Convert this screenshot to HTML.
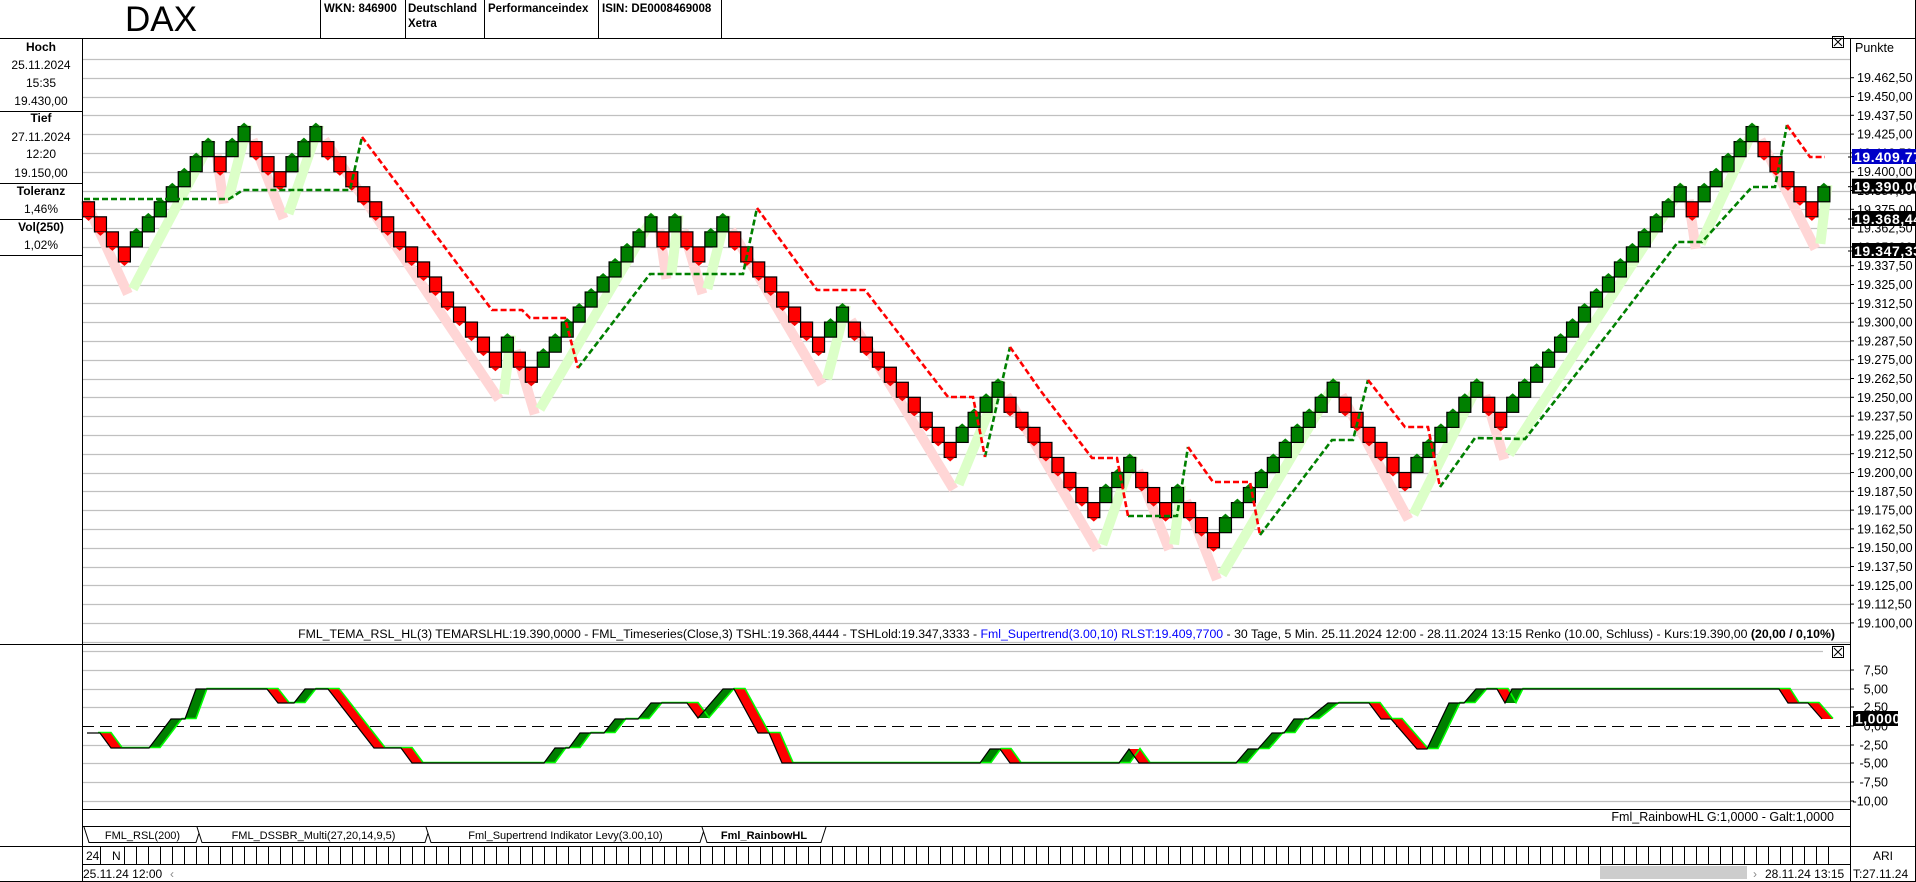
<!DOCTYPE html>
<html><head><meta charset="utf-8">
<style>
html,body{margin:0;padding:0;background:#fff;width:1916px;height:882px;overflow:hidden;font-family:"Liberation Sans",Arial,sans-serif;}
svg{position:absolute;left:0;top:0;}
.t{font-family:"Liberation Sans",Arial,sans-serif;}
#legend{position:absolute;right:81px;top:627px;font-size:12.3px;white-space:nowrap;color:#000;font-family:"Liberation Sans",Arial,sans-serif;}
</style></head><body>
<svg id="s" width="1916" height="882" xmlns="http://www.w3.org/2000/svg">
<g id="grid"></g>
<g id="bands"></g>
<g id="bricks"></g>
<g id="dash"></g>
<g id="ind"></g>
<g id="frame" stroke="#000" stroke-width="1" fill="none">
<line x1="0" y1="38.5" x2="1916" y2="38.5"/>
<line x1="82.5" y1="38" x2="82.5" y2="882"/>
<line x1="1850.5" y1="38" x2="1850.5" y2="882"/>
<line x1="1915.5" y1="0" x2="1915.5" y2="882"/>
<line x1="320.5" y1="0" x2="320.5" y2="38"/>
<line x1="405.5" y1="0" x2="405.5" y2="38"/>
<line x1="484.5" y1="0" x2="484.5" y2="38"/>
<line x1="598.5" y1="0" x2="598.5" y2="38"/>
<line x1="721.5" y1="0" x2="721.5" y2="38"/>
<line x1="0" y1="111.5" x2="82" y2="111.5"/>
<line x1="0" y1="183.5" x2="82" y2="183.5"/>
<line x1="0" y1="219.5" x2="82" y2="219.5"/>
<line x1="0" y1="255.5" x2="82" y2="255.5"/>
<line x1="0" y1="644.5" x2="1850" y2="644.5"/>
<line x1="82" y1="809.5" x2="1850" y2="809.5"/>
<line x1="82" y1="826.5" x2="1850" y2="826.5"/>
<line x1="0" y1="846.5" x2="1916" y2="846.5"/>
<line x1="82" y1="864.5" x2="1850" y2="864.5"/>
<line x1="0" y1="881.5" x2="1916" y2="881.5"/>
<rect x="1832.5" y="36.5" width="11" height="11"/>
<path d="M1834 38 L1842 46 M1842 38 L1834 46"/>
<rect x="1832.5" y="646.5" width="11" height="11"/>
<path d="M1834 648 L1842 656 M1842 648 L1834 656"/>
</g>
<g class="t" fill="#000">
<text x="125" y="31" font-size="35">DAX</text>
<text x="324" y="12" font-size="11.5" font-weight="bold">WKN: 846900</text>
<text x="408" y="12" font-size="11.5" font-weight="bold">Deutschland</text>
<text x="408" y="27" font-size="11.5" font-weight="bold">Xetra</text>
<text x="488" y="12" font-size="11.5" font-weight="bold">Performanceindex</text>
<text x="602" y="12" font-size="11.5" font-weight="bold">ISIN: DE0008469008</text>
<g font-size="12" text-anchor="middle">
<text x="41" y="51" font-weight="bold">Hoch</text>
<text x="41" y="69">25.11.2024</text>
<text x="41" y="87">15:35</text>
<text x="41" y="105">19.430,00</text>
<text x="41" y="122" font-weight="bold">Tief</text>
<text x="41" y="141">27.11.2024</text>
<text x="41" y="158">12:20</text>
<text x="41" y="177">19.150,00</text>
<text x="41" y="195" font-weight="bold">Toleranz</text>
<text x="41" y="213">1,46%</text>
<text x="41" y="231" font-weight="bold">Vol(250)</text>
<text x="41" y="249">1,02%</text>
</g>
<text x="1855" y="52" font-size="12.5">Punkte</text>
</g>
<g id="axis" class="t"></g>
<g id="tabs" class="t"></g>
<g id="time" class="t"></g>
</svg>
<div id="legend">FML_TEMA_RSL_HL(3) TEMARSLHL:19.390,0000 - FML_Timeseries(Close,3) TSHL:19.368,4444 - TSHLold:19.347,3333 - <span style="color:#0000ff">Fml_Supertrend(3.00,10) RLST:19.409,7700</span> - 30 Tage, 5 Min. 25.11.2024 12:00 - 28.11.2024 13:15 Renko (10.00, Schluss) - Kurs:19.390,00 <b>(20,00 / 0,10%)</b></div>
<script>
var NS="http://www.w3.org/2000/svg";
function el(p,t,a,txt){var e=document.createElementNS(NS,t);for(var k in a)e.setAttribute(k,a[k]);if(txt!==undefined)e.textContent=txt;document.getElementById(p).appendChild(e);return e;}
function Y(p){return 77.7+(19462.5-p)*1.504;}
function fmt(v,d){var neg=v<0;v=Math.abs(v);var s=v.toFixed(d).split('.');var i=s[0].replace(/\B(?=(\d{3})+(?!\d))/g,'.');return (neg?'-':'')+i+(d?','+s[1]:'');}
for(var p=19475;p>=19087.5;p-=12.5){var y=Math.round(Y(p))+0.5;el('grid','line',{x1:82,x2:1850,y1:y,y2:y,stroke:'#c0c0c0','stroke-width':1.2});}
for(var p=19462.5;p>=19099;p-=12.5){var y=Y(p);el('axis','line',{x1:1850,x2:1854,y1:y,y2:y,stroke:'#000'});el('axis','text',{x:1857,y:y+4.5,'font-size':12.5,fill:'#000'},fmt(p,2));}
[651,670,689,707,745,763,782,801].forEach(function(y){el('grid','line',{x1:82,x2:(y==651?1823:1850),y1:y+0.5,y2:y+0.5,stroke:'#c0c0c0','stroke-width':1.2});});
el('grid','line',{x1:82,x2:1850,y1:726.5,y2:726.5,stroke:'#000','stroke-dasharray':'12 6'});
[[670,'7,50'],[689,'5,00'],[707,'2,50'],[726,'0,00'],[745,'-2,50'],[763,'-5,00'],[782,'-7,50'],[801,'-10,00']].forEach(function(a){el('axis','line',{x1:1850,x2:1854,y1:a[0],y2:a[0],stroke:'#000'});el('axis','text',{x:1888,y:a[0]+4.5,'font-size':12.5,'text-anchor':'end',fill:'#000'},a[1]);});
[[157,'#0000c8','19.409,77'],[186.7,'#000','19.390,00'],[219,'#000','19.368,44'],[251,'#000','19.347,33']].forEach(function(b){el('axis','line',{x1:1848,x2:1853,y1:b[0],y2:b[0],stroke:'#000'});el('axis','rect',{x:1852,y:b[0]-8,width:64,height:15,fill:b[1]});el('axis','text',{x:1854,y:b[0]+5,'font-size':14,'font-weight':'bold',fill:'#fff','letter-spacing':'0.6'},b[2]);});
el('axis','rect',{x:1853,y:711,width:45,height:15,fill:'#000'});
el('axis','text',{x:1855,y:723.5,'font-size':14,'font-weight':'bold',fill:'#fff','letter-spacing':'0.5'},'1,0000');
var runs=[['D',3],['U',7],['D',1],['U',2],['D',3],['U',3],['D',15],['U',1],['D',2],['U',10],['D',1],['U',1],['D',2],['U',2],['D',8],['U',2],['D',9],['U',4],['D',8],['U',3],['D',3],['U',1],['D',3],['U',10],['D',6],['U',6],['D',2],['U',15],['D',1],['U',5],['D',5],['U',1]];
var tops=[19380],dirs=['D'];
runs.forEach(function(r){for(var i=0;i<r[1];i++){tops.push(tops[tops.length-1]+(r[0]=='U'?10:-10));dirs.push(r[0]);}});
var P=11.968;function X(i){return 82+P*i;}
var runList=[],a=0;for(var i=1;i<=dirs.length;i++){if(i==dirs.length||dirs[i]!=dirs[a]){runList.push([a,i-1,dirs[a]]);a=i;}}
runList.forEach(function(r){var xa=X(r[0]),xb=X(r[1]);if(r[2]=='U'){var lo=tops[r[0]]-10,hi=tops[r[1]];el('bands','line',{x1:xa+3,y1:Y(lo)+42,x2:xb+10,y2:Y(hi)-2,stroke:'#dcffc8','stroke-width':10});}else{var hi=tops[r[0]],lo=tops[r[1]]-10;el('bands','line',{x1:xa+3,y1:Y(hi)-2,x2:xb+10,y2:Y(lo)+32,stroke:'#ffd6d6','stroke-width':10});}});
for(var i=0;i<tops.length;i++){var x=X(i),yt=Y(tops[i]),yb=Y(tops[i]-10),up=dirs[i]=='U';var c=up?'#008000':'#ff0000';
el('bricks','rect',{x:x+0.5,y:yt,width:12,height:yb-yt,fill:c,stroke:'#000','stroke-width':1.2});
if(up)el('bricks','polygon',{points:(x+2)+','+yt+' '+(x+6.5)+','+(yt-4)+' '+(x+11)+','+yt,fill:c});
else el('bricks','polygon',{points:(x+2)+','+yb+' '+(x+6.5)+','+(yb+4)+' '+(x+11)+','+yb,fill:c});}
var G=[[[84,199],[229,199],[243,190],[350,190],[362,137]],[[578,368],[650,274],[743,274],[757,208]],[[985,457],[1010,347]],[[1128,516],[1177,516],[1188,447]],[[1260,535],[1332,440],[1353,440],[1368,380]],[[1440,487],[1475,438],[1525,439],[1613,327],[1678,242],[1702,242],[1752,187],[1775,187],[1787,125]]];
var R=[[[362,137],[492,310],[522,310],[530,318],[565,318],[578,368]],[[757,208],[817,290],[865,290],[948,397],[973,397],[985,457]],[[1010,347],[1040,390],[1092,458],[1117,458],[1128,516]],[[1188,447],[1213,482],[1250,482],[1260,535]],[[1368,380],[1405,427],[1428,427],[1440,487]],[[1787,125],[1810,157],[1825,157]]];
function pts(a){return a.map(function(p){return p.join(',');}).join(' ');}
G.forEach(function(l){el('dash','polyline',{points:pts(l),fill:'none',stroke:'#008000','stroke-width':2.6,'stroke-dasharray':'6 3'});});
R.forEach(function(l){el('dash','polyline',{points:pts(l),fill:'none',stroke:'#ff0000','stroke-width':2.6,'stroke-dasharray':'6 3'});});
var I=[[87,733],[100,733],[111,748],[149,748],[171,719],[185,719],[196,689],[267,689],[278,703],[294,703],[305,689],[328,689],[374,748],[401,748],[412,763],[544,763],[555,748],[569,748],[580,733],[604,733],[615,719],[638,719],[651,703],[687,703],[698,718],[723,689],[734,689],[758,733],[769,733],[782,763],[980,763],[990,749],[1000,749],[1010,763],[1119,763],[1129,749],[1139,763],[1236,763],[1248,749],[1258,749],[1272,733],[1284,733],[1294,719],[1308,719],[1328,703],[1369,703],[1381,719],[1391,719],[1417,749],[1427,749],[1449,703],[1464,703],[1476,689],[1497,689],[1505,703],[1512,689],[1779,689],[1788,703],[1808,703],[1822,719]];
var dx=11;
for(var i=0;i<I.length-1;i++){var p=I[i],q=I[i+1];if(p[1]!=q[1]){var c=q[1]<p[1]?'#008000':'#ff0000';el('ind','polygon',{points:p[0]+','+p[1]+' '+q[0]+','+q[1]+' '+(q[0]+dx)+','+q[1]+' '+(p[0]+dx)+','+p[1],fill:c});}}
el('ind','polyline',{points:I.map(function(p){return (p[0]+dx)+','+(p[1]-0.5);}).join(' '),fill:'none',stroke:'#00ff00','stroke-width':1.6});
el('ind','polyline',{points:pts(I),fill:'none',stroke:'#000','stroke-width':1.2});
el('ind','text',{x:1834,y:821,'font-size':12.5,'text-anchor':'end',fill:'#000',class:'t'},'Fml_RainbowHL G:1,0000 - Galt:1,0000');
[[84,201,'FML_RSL(200)',0],[197,430,'FML_DSSBR_Multi(27,20,14,9,5)',0],[426,705,'Fml_Supertrend Indikator Levy(3.00,10)',0],[702,826,'Fml_RainbowHL',1]].forEach(function(t){el('tabs','path',{d:'M'+t[0]+' 827 L'+(t[0]+5)+' 842.5 L'+(t[1]-5)+' 842.5 L'+t[1]+' 827',fill:'#fff',stroke:'#000','stroke-width':1});el('tabs','text',{x:(t[0]+t[1])/2,y:839,'font-size':11,'text-anchor':'middle','font-weight':t[3]?'bold':'normal',fill:'#000'},t[2]);});
for(var x=100.5;x<1832;x+=12){el('time','line',{x1:x,x2:x,y1:846,y2:864,stroke:'#000'});}
el('time','rect',{x:83,y:847,width:17,height:17,fill:'#fff'});
el('time','line',{x1:100.5,x2:100.5,y1:846,y2:864,stroke:'#000'});
el('time','rect',{x:101,y:847,width:23,height:17,fill:'#fff'});
el('time','line',{x1:124.5,x2:124.5,y1:846,y2:864,stroke:'#000'});
el('time','text',{x:86,y:860,'font-size':12,fill:'#000'},'24');
el('time','text',{x:112,y:860,'font-size':12,fill:'#000'},'N');
el('time','rect',{x:1834,y:847,width:16,height:17,fill:'#fff'});
el('time','text',{x:83,y:878,'font-size':12,fill:'#000'},'25.11.24 12:00');
el('time','text',{x:170,y:878,'font-size':12,fill:'#888'},'‹');
el('time','rect',{x:1600,y:866,width:147,height:13,fill:'#cdcdcd'});
el('time','text',{x:1753,y:878,'font-size':12,fill:'#888'},'›');
el('time','text',{x:1765,y:878,'font-size':12,fill:'#000'},'28.11.24 13:15');
el('time','text',{x:1883,y:860,'font-size':12,'text-anchor':'middle',fill:'#000'},'ARI');
el('time','text',{x:1853,y:878,'font-size':12,fill:'#000'},'T:27.11.24');
</script>
</body></html>
